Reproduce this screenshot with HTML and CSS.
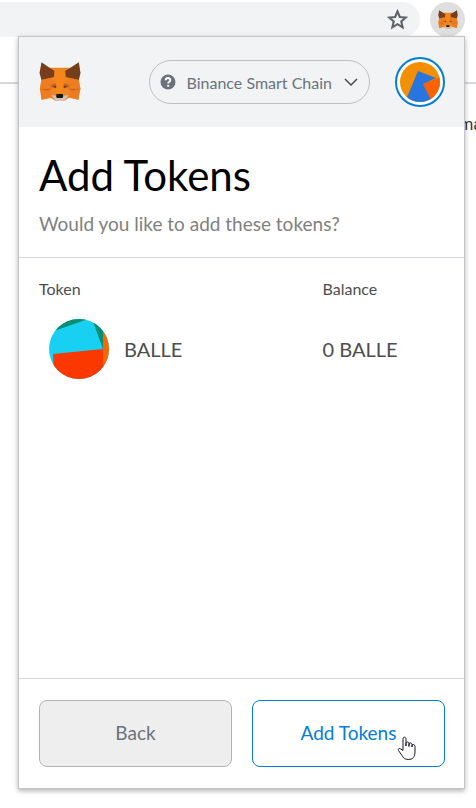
FILE: index.html
```html
<!DOCTYPE html>
<html lang="en">
<head>
<meta charset="utf-8">
<title>Add Tokens</title>
<link rel="stylesheet" href="styles.css">
</head>
<body>
<svg class="symbols" aria-hidden="true">
  <symbol id="fox" viewBox="29 30 125 120">
    <path fill="#f08420" d="M58 47H122L146 84 153 110 146 143 118 137 105 147H78L65 138 36 143 31 110 36 84Z"/>
    <path fill="#763e1a" d="M36 31L58 46 75 57 73 75 36 84 30 63ZM148 31L125 46 107 57 109 75 148 84 153 63Z"/>
    <path fill="#ed7d20" d="M36 84L62 78 78 94 65 110 31 112ZM148 84L120 78 104 94 118 110 153 112ZM33 112L65 111 62 136 37 143ZM151 112L118 111 121 136 147 143Z"/>
    <path fill="#f6851b" d="M75 57H107L101 94 99 124H82L79 94Z"/>
    <path fill="#cd6116" d="M62 100L78 94 82 106 68 107ZM121 100L104 94 100 106 115 107ZM31 111L65 110 55 116ZM153 111L118 110 128 116Z"/>
    <path fill="#334048" d="M71 101L79 102 80 108 74 106ZM112 101L104 102 103 108 109 106Z"/>
    <path fill="#d7c1b3" d="M66 129L82 131H101L117 129 105 147H78Z"/>
    <path fill="#161616" d="M81 126H100L101 135 98 138H83L80 135Z"/>
  </symbol>
</svg>

<div class="toolbar">
  <div class="omnibox">
    <svg class="star" viewBox="0 0 20 20" aria-hidden="true"><path d="M10 2.3L12.2 7.6 18 8.100 13.600 11.900 14.900 17.500 10 14.500 5.100 17.500 6.400 11.900 2 8.100 7.800 7.600Z"/></svg>
  </div>
  <button class="extension" aria-label="MetaMask"><svg aria-hidden="true"><use href="#fox"/></svg></button>
</div>
<div class="page"><div class="page-rule"></div><p class="page-text">ma</p></div>

<main class="popup">
  <header class="header">
    <svg class="logo" aria-hidden="true"><use href="#fox"/></svg>
    <button class="network">
      <svg class="help" viewBox="0 0 16 16" aria-hidden="true"><circle cx="8" cy="8" r="7.500"/><path d="M5.700 6.300C5.900 3.300 10.500 3.500 10.300 6.200 10.200 7.800 8.200 7.700 8.200 9.400M8.200 11V12.700"/></svg>
      <span>Binance Smart Chain</span>
      <svg class="chevron" viewBox="0 0 14 8" aria-hidden="true"><path d="M1 1L7 7 13 1"/></svg>
    </button>
    <button class="account" aria-label="Account">
      <svg viewBox="0 0 40 40" aria-hidden="true"><path fill="#f28f05" d="M0 0H40V40H0Z"/><path fill="#fa6200" d="M23 22L40 15V40H30Z"/><path fill="#2875df" d="M18 9L36 16 23 22 32 40H5Z"/></svg>
    </button>
  </header>

  <section class="intro">
    <h1>Add Tokens</h1>
    <p>Would you like to add these tokens?</p>
  </section>

  <section class="tokens">
    <table>
      <thead><tr><th>Token</th><th>Balance</th></tr></thead>
      <tbody><tr>
        <td><div class="token">
          <svg viewBox="0 0 60 60" aria-hidden="true"><path fill="#18d0f1" d="M0 0H60V60H0Z"/><path fill="#078d71" d="M5 12L39 0H0ZM43 0L54 30V0Z"/><path fill="#fa6700" d="M54 0H60V60H54Z"/><path fill="#fa3800" d="M4 35L54 30V60H5Z"/></svg>
          <span>BALLE</span>
        </div></td>
        <td>0 BALLE</td>
      </tr></tbody>
    </table>
  </section>

  <footer class="actions">
    <button class="back">Back</button>
    <button class="add">Add Tokens</button>
  </footer>
</main>
<svg class="cursor" viewBox="0 0 19 25" aria-hidden="true"><path d="M6 14.500V3.200C6 .4 9 .4 9 3.200V10 7.500C9 5.500 12 5.500 12 7.500V10.500 8C12 6.300 15 6.500 15 8.500V11 9.500C15 8 18 8 18 10.500V16C18 21 15.500 23.500 11.500 23.500 8 23.500 6.500 22 5 19.500L1.500 14.500C.5 12.800 2.500 11.800 3.800 13Z"/></svg>
</body>
</html>
```

FILE: styles.css
```css
* { box-sizing: border-box; }

body {
  position: relative;
  min-height: 100vh;
  margin: 0;
  overflow-x: hidden;
  background: #fff;
  color: #4d4d4d;
  font-family: Lato, "Liberation Sans", sans-serif;
}

button { padding: 0; font: inherit; cursor: pointer; }
svg { display: block; }
.symbols { position: absolute; width: 0; height: 0; }

.toolbar {
  display: flex;
  gap: 10px;
  padding: 2px 11px 0 0;
}
.omnibox {
  display: flex;
  flex: 1;
  align-items: center;
  justify-content: flex-end;
  height: 35px;
  padding-right: 12px;
  border-radius: 0 18px 18px 0;
  background: #f1f3f4;
}
.star { width: 21px; height: 21px; fill: none; stroke: #5f6368; stroke-width: 2; }
.extension {
  display: grid;
  place-items: center;
  width: 35px;
  height: 35px;
  border: 0;
  border-radius: 50%;
  background: #dfdfe0;
}
.extension svg { width: 20px; height: 19px; }

.page { padding-top: 45px; overflow: hidden; }
.page-rule { height: 2px; background: #d6d6dd; }
.page-text {
  margin: 30px -6px 0 0;
  color: #333;
  font: 16px/22px Roboto, sans-serif;
  text-align: right;
}

.popup {
  position: absolute;
  inset: 36px 11px 19px 18px;
  display: flex;
  flex-direction: column;
  border: 1px solid #c4c4c4;
  background: #fff;
  box-shadow: 0 2px 5px rgba(0, 0, 0, 0.3);
}

.header {
  display: flex;
  align-items: center;
  height: 90px;
  padding: 0 19px 0 20px;
  background: #f2f3f4;
}
.logo { width: 42px; height: 40px; }
.network {
  display: flex;
  align-items: center;
  height: 44px;
  margin: 0 25px 0 auto;
  padding: 0 11px 0 10px;
  border: 1px solid #bbc0c5;
  border-radius: 22px;
  background: transparent;
  color: #6a737d;
  font-size: 16px;
}
.help { width: 16px; height: 16px; margin-right: 11px; fill: #6a737d; }
.help path { fill: none; stroke: #fff; stroke-width: 2; }
.chevron { width: 14px; height: 8px; margin-left: 12px; fill: none; stroke: #4d4d4d; stroke-width: 1.5; }
.account {
  display: grid;
  place-items: center;
  width: 50px;
  height: 50px;
  border: 2px solid #037dd6;
  border-radius: 50%;
  background: #fff;
}
.account svg { width: 40px; height: 40px; border-radius: 50%; }

.intro {
  padding: 24px 20px 20px;
  border-bottom: 1px solid #d2d8dd;
}
.intro h1 {
  margin: 0;
  color: #000;
  font-size: 42px;
  font-weight: 400;
  line-height: 48px;
}
.intro p {
  margin: 12px 0 0;
  color: #808080;
  font-size: 19px;
  line-height: 26px;
}

.tokens { flex: 1; padding: 20px; }
table { width: 100%; border-collapse: collapse; table-layout: fixed; }
th, td { padding: 0; font-weight: 400; text-align: left; }
th { font-size: 16px; line-height: 22px; }
th:first-child { width: 70%; }
td { padding-top: 19px; font-size: 20px; }
.token { display: flex; align-items: center; gap: 15px; padding-left: 10px; }
.token svg { width: 60px; height: 60px; border-radius: 50%; }

.actions {
  display: grid;
  grid-template-columns: 1fr 1fr;
  gap: 20px;
  padding: 21px 19px 21px 20px;
  border-top: 1px solid #d2d8dd;
}
.actions button {
  height: 67px;
  padding-bottom: 2px;
  border: 1px solid;
  border-radius: 8px;
  font-size: 19px;
}
.actions .back { border-color: #b3b3b3; background: #eee; color: #6a737d; }
.actions .add { border-color: #037dd6; background: #fff; color: #037dd6; }

.cursor {
  position: absolute;
  top: 736px;
  right: 60px;
  width: 19px;
  height: 25px;
  fill: #fff;
  stroke: #171725;
  stroke-width: 1;
  pointer-events: none;
}
```
